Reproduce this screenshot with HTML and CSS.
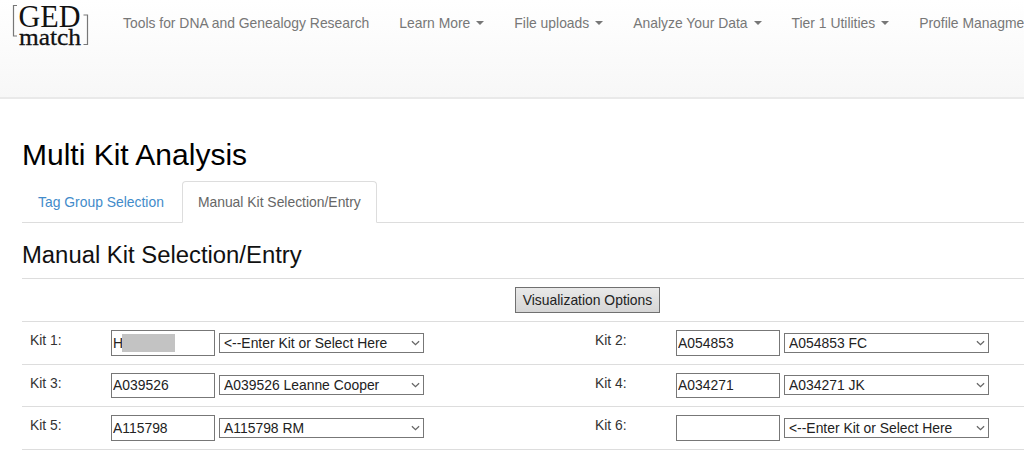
FILE: index.html
```html
<!DOCTYPE html>
<html lang="en">
<head>
<meta charset="utf-8">
<title>Multi Kit Analysis</title>
<link rel="stylesheet" href="styles.css">
</head>
<body>
<header class="navbar">
  <a class="brand" href="#">
    <svg class="logo" width="78" height="46" viewBox="0 0 78 46">
      <path class="bracket" d="M5 2.5H1.5V33H5M71.5 12H75.5V41.5H71.5"/>
      <text class="logo-top" x="6.5" y="23.5" textLength="62" lengthAdjust="spacingAndGlyphs">GED</text>
      <text class="logo-bottom" x="7" y="42" textLength="62" lengthAdjust="spacingAndGlyphs">match</text>
    </svg>
  </a>
  <nav class="nav">
    <a class="nav-link" href="#"><span>Tools for DNA and Genealogy Research</span></a>
    <a class="nav-link" href="#"><span>Learn More</span><i class="caret"></i></a>
    <a class="nav-link" href="#"><span>File uploads</span><i class="caret"></i></a>
    <a class="nav-link" href="#"><span>Analyze Your Data</span><i class="caret"></i></a>
    <a class="nav-link" href="#"><span>Tier 1 Utilities</span><i class="caret"></i></a>
    <a class="nav-link" href="#"><span>Profile Managment</span></a>
  </nav>
</header>
<main class="content">
  <h1 class="title">Multi Kit Analysis</h1>
  <div class="tabs">
    <a class="tab" href="#">Tag Group Selection</a>
    <a class="tab active" href="#">Manual Kit Selection/Entry</a>
  </div>
  <h2 class="subtitle">Manual Kit Selection/Entry</h2>
  <form class="kits">
    <div class="row options"><button class="button" type="button">Visualization Options</button></div>
    <div class="row">
      <label class="label">Kit 1:</label>
      <div class="field"><span class="entry"><input class="input" value="H"><span class="redacted"></span></span>
        <span class="picker"><select class="select"><option>&lt;--Enter Kit or Select Here</option></select><svg class="chevron" viewBox="0 0 10 6"><path d="M1 1l4 3.8L9 1"/></svg></span></div>
      <label class="label">Kit 2:</label>
      <div class="field"><span class="entry"><input class="input" value="A054853"></span>
        <span class="picker"><select class="select"><option>A054853 FC</option></select><svg class="chevron" viewBox="0 0 10 6"><path d="M1 1l4 3.8L9 1"/></svg></span></div>
    </div>
    <div class="row compact">
      <label class="label">Kit 3:</label>
      <div class="field"><span class="entry"><input class="input" value="A039526"></span>
        <span class="picker"><select class="select"><option>A039526 Leanne Cooper</option></select><svg class="chevron" viewBox="0 0 10 6"><path d="M1 1l4 3.8L9 1"/></svg></span></div>
      <label class="label">Kit 4:</label>
      <div class="field"><span class="entry"><input class="input" value="A034271"></span>
        <span class="picker"><select class="select"><option>A034271 JK</option></select><svg class="chevron" viewBox="0 0 10 6"><path d="M1 1l4 3.8L9 1"/></svg></span></div>
    </div>
    <div class="row">
      <label class="label">Kit 5:</label>
      <div class="field"><span class="entry"><input class="input" value="A115798"></span>
        <span class="picker"><select class="select"><option>A115798 RM</option></select><svg class="chevron" viewBox="0 0 10 6"><path d="M1 1l4 3.8L9 1"/></svg></span></div>
      <label class="label">Kit 6:</label>
      <div class="field"><span class="entry"><input class="input" value=""></span>
        <span class="picker"><select class="select"><option>&lt;--Enter Kit or Select Here</option></select><svg class="chevron" viewBox="0 0 10 6"><path d="M1 1l4 3.8L9 1"/></svg></span></div>
    </div>
  </form>
</main>
</body>
</html>
```
FILE: styles.css
```css
* { box-sizing: border-box; }
body {
  margin: 0;
  height: 454px;
  overflow: hidden;
  background: #fff;
  color: #333;
  font: 13.9px/20px "Liberation Sans", Arial, sans-serif;
}
a { text-decoration: none; }

.navbar {
  display: flex;
  height: 99px;
  overflow: hidden;
  padding-left: 12px;
  background: linear-gradient(#fff, #f7f7f7);
  border-bottom: 2px solid #e9e9e9;
}
.brand { flex: none; width: 96px; padding-top: 3px; }
.logo { display: block; }
.bracket { fill: none; stroke: #777; stroke-width: 1.2; }
.logo-top, .logo-bottom {
  font-family: "Liberation Serif", "Times New Roman", serif;
  fill: #111;
}
.logo-top { font-size: 31px; }
.logo-bottom { font-size: 24px; stroke: #111; stroke-width: .3; }
.nav { display: flex; flex: none; padding-top: 13px; }
.nav-link {
  display: flex;
  align-items: center;
  height: 20px;
  padding: 0 15px;
  color: #777;
  white-space: nowrap;
}
.caret {
  margin-left: 6px;
  border: 4px solid transparent;
  border-top-color: #777;
  border-bottom: 0;
}

.content { padding-left: 22px; overflow: hidden; }
.title {
  margin: 0;
  padding-top: 38px;
  height: 82px;
  color: #000;
  font-size: 30px;
  font-weight: 400;
  line-height: 36px;
}
.tabs {
  display: flex;
  height: 42px;
  gap: 2px;
  border-bottom: 1px solid #ddd;
}
.tab {
  height: 42px;
  padding: 10px 15px;
  border: 1px solid transparent;
  color: #428bca;
  line-height: 20px;
  white-space: nowrap;
}
.tab.active {
  background: #fff;
  border-color: #ddd #ddd #fff;
  border-radius: 4px 4px 0 0;
  color: #666;
}
.subtitle {
  margin: 0;
  padding-top: 17px;
  height: 55px;
  color: #111;
  font-size: 23.85px;
  font-weight: 400;
  line-height: 29px;
}

.kits { width: 1131px; display: grid; grid-template-rows: 43px 43px 42px 44px; }
.row {
  display: grid;
  grid-template-columns: 81px 484px 81px 485px;
  border-top: 1px solid #ddd;
}
.row:last-child { border-bottom: 1px solid #ddd; }
.row.options { display: flex; justify-content: center; padding-top: 8px; }
.label { padding: 8px 0 0 8px; line-height: 20px; }
.field { display: flex; gap: 4px; padding: 8px 0 0 8px; }
.entry, .picker { position: relative; height: 26px; }
.input, .select {
  margin: 0;
  border: 1px solid #777;
  border-radius: 0;
  background: #fff;
  color: #222;
  font: inherit;
}
.input { display: block; width: 104px; height: 26px; padding: 1px 1px; }
.picker { padding-top: 3px; }
.select { display: block; appearance: none; width: 205px; height: 20px; padding: 0 4px; line-height: 18px; }
.compact .input { height: 25px; padding-bottom: 2px; }
.compact .picker { padding-top: 2px; }
.compact .chevron { top: 9px; }
.redacted { position: absolute; left: 11px; top: 4px; width: 53px; height: 18px; background: #c3c3c3; }
.chevron { position: absolute; right: 4px; top: 10px; width: 9px; height: 6px; }
.chevron path { fill: none; stroke: #666; stroke-width: 1.4; }
.button {
  width: 145px;
  height: 26px;
  padding: 0;
  border: 1px solid #707070;
  border-radius: 0;
  background: linear-gradient(#e9e9e9, #d5d5d5);
  color: #222;
  font: inherit;
}
```
